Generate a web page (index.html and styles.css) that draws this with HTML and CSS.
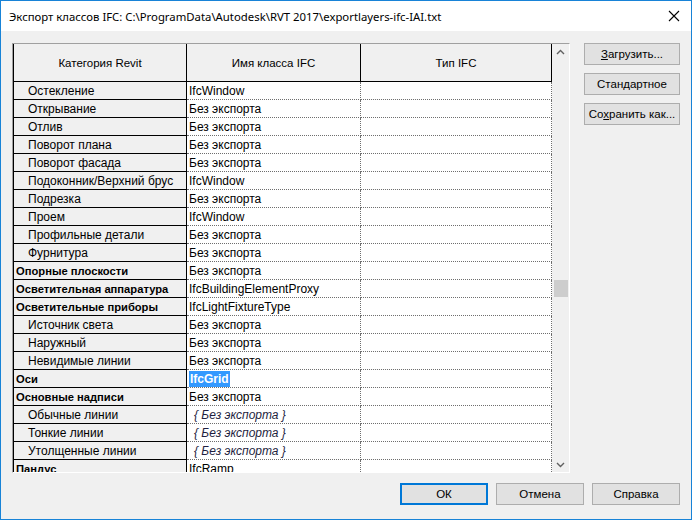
FILE: index.html
```html
<!DOCTYPE html>
<html lang="ru">
<head>
<meta charset="utf-8">
<title>Экспорт классов IFC</title>
<link rel="stylesheet" href="styles.css">
</head>
<body>
<div class="window">
  <div class="titlebar">
    <span class="title">Экспорт классов IFC: C:\ProgramData\Autodesk\RVT 2017\exportlayers-ifc-IAI.txt</span>
    <svg class="close" width="12" height="12" viewBox="0 0 12 12"><path d="M1 1 L11 11 M11 1 L1 11" stroke="#000" stroke-width="1.1" fill="none"/></svg>
  </div>
  <div class="content">
    <div class="top">
      <div class="panel">
        <div class="table">
          <div class="row head">
            <div class="hc">Категория Revit</div>
            <div class="hc">Имя класса IFC</div>
            <div class="hc">Тип IFC</div>
          </div>
          <div class="row"><div class="c1 sub">Остекление</div><div class="c2">IfcWindow</div><div class="c3"></div></div>
          <div class="row"><div class="c1 sub">Открывание</div><div class="c2">Без экспорта</div><div class="c3"></div></div>
          <div class="row"><div class="c1 sub">Отлив</div><div class="c2">Без экспорта</div><div class="c3"></div></div>
          <div class="row"><div class="c1 sub">Поворот плана</div><div class="c2">Без экспорта</div><div class="c3"></div></div>
          <div class="row"><div class="c1 sub">Поворот фасада</div><div class="c2">Без экспорта</div><div class="c3"></div></div>
          <div class="row"><div class="c1 sub">Подоконник/Верхний брус</div><div class="c2">IfcWindow</div><div class="c3"></div></div>
          <div class="row"><div class="c1 sub">Подрезка</div><div class="c2">Без экспорта</div><div class="c3"></div></div>
          <div class="row"><div class="c1 sub">Проем</div><div class="c2">IfcWindow</div><div class="c3"></div></div>
          <div class="row"><div class="c1 sub">Профильные детали</div><div class="c2">Без экспорта</div><div class="c3"></div></div>
          <div class="row"><div class="c1 sub">Фурнитура</div><div class="c2">Без экспорта</div><div class="c3"></div></div>
          <div class="row"><div class="c1 main">Опорные плоскости</div><div class="c2">Без экспорта</div><div class="c3"></div></div>
          <div class="row"><div class="c1 main">Осветительная аппаратура</div><div class="c2">IfcBuildingElementProxy</div><div class="c3"></div></div>
          <div class="row"><div class="c1 main">Осветительные приборы</div><div class="c2">IfcLightFixtureType</div><div class="c3"></div></div>
          <div class="row"><div class="c1 sub">Источник света</div><div class="c2">Без экспорта</div><div class="c3"></div></div>
          <div class="row"><div class="c1 sub">Наружный</div><div class="c2">Без экспорта</div><div class="c3"></div></div>
          <div class="row"><div class="c1 sub">Невидимые линии</div><div class="c2">Без экспорта</div><div class="c3"></div></div>
          <div class="row"><div class="c1 main">Оси</div><div class="c2"><span class="sel">IfcGrid</span></div><div class="c3"></div></div>
          <div class="row"><div class="c1 main">Основные надписи</div><div class="c2">Без экспорта</div><div class="c3"></div></div>
          <div class="row"><div class="c1 sub">Обычные линии</div><div class="c2 inh">{ Без экспорта }</div><div class="c3"></div></div>
          <div class="row"><div class="c1 sub">Тонкие линии</div><div class="c2 inh">{ Без экспорта }</div><div class="c3"></div></div>
          <div class="row"><div class="c1 sub">Утолщенные линии</div><div class="c2 inh">{ Без экспорта }</div><div class="c3"></div></div>
          <div class="row"><div class="c1 main">Пандус</div><div class="c2">IfcRamp</div><div class="c3"></div></div>
        </div>
        <div class="scrollbar">
          <svg class="arrow" width="9" height="6" viewBox="0 0 9 6"><path d="M1 5 L4.5 1.5 L8 5" stroke="#606060" stroke-width="1.4" fill="none"/></svg>
          <div class="track"><div class="thumb"></div></div>
          <svg class="arrow" width="9" height="6" viewBox="0 0 9 6"><path d="M1 1 L4.5 4.5 L8 1" stroke="#606060" stroke-width="1.4" fill="none"/></svg>
        </div>
      </div>
      <div class="side">
        <button class="btn side-btn"><u>З</u>агрузить...</button>
        <button class="btn side-btn">Стандартное</button>
        <button class="btn side-btn">Со<u>х</u>ранить как...</button>
      </div>
    </div>
    <div class="bottom">
      <button class="btn foot-btn default">ОК</button>
      <button class="btn foot-btn">Отмена</button>
      <button class="btn foot-btn">Справка</button>
    </div>
  </div>
</div>
</body>
</html>
```

FILE: styles.css
```css
* { box-sizing: border-box; }
html, body { margin: 0; padding: 0; }
body {
  width: 692px;
  height: 520px;
  background: #f0f0f0;
  font-family: "Liberation Sans", Arial, sans-serif;
  font-size: 12px;
  color: #000;
  overflow: hidden;
}
.window {
  width: 692px;
  height: 520px;
  border: 1px solid #1883d7;
  background: #f0f0f0;
  display: flex;
  flex-direction: column;
}
.titlebar {
  height: 30px;
  background: #fff;
  display: flex;
  align-items: center;
  justify-content: space-between;
  padding: 0 10px 0 8px;
  flex: none;
}
.title {
  font-family: "Noto Sans", "Open Sans", sans-serif;
  font-size: 11.35px;
  color: #000;
  padding-top: 1px;
}
.close { display: block; margin-right: 1px; }
.content {
  flex: 1;
  display: flex;
  flex-direction: column;
  padding: 12px 11px 0 11px;
}
.top {
  display: flex;
  align-items: flex-start;
  gap: 14px;
}
.panel {
  width: 559px;
  height: 430px;
  border: 1px solid #a0a0a0;
  border-right-color: #fff;
  border-bottom-color: #fff;
  display: flex;
  overflow: hidden;
  background: #fff;
}
.table {
  width: 539px;
  border-left: 1px solid #000;
  overflow: hidden;
  flex: none;
}
.row {
  display: grid;
  grid-template-columns: 173px 174px 191px;
  height: 18px;
}
.row.head { height: 38px; }
.hc {
  background: #f0f0f0;
  border-right: 1px solid #000;
  border-bottom: 1px solid #000;
  display: flex;
  align-items: center;
  justify-content: center;
  font-size: 11.5px;
  padding-top: 1px;
}
.c1 {
  background: #f0f0f0;
  border-right: 1px solid #000;
  border-bottom: 1px solid #000;
  display: flex;
  align-items: center;
  white-space: nowrap;
  overflow: hidden;
  padding-top: 1px;
}
.c1.main { font-weight: bold; font-size: 11.2px; padding-left: 2px; }
.c1.sub { padding-left: 14px; }
.c2, .c3 {
  background: #fff;
  border-right: 1px dotted #6e6e6e;
  border-bottom: 1px dotted #6e6e6e;
  display: flex;
  align-items: center;
  white-space: nowrap;
  overflow: hidden;
  padding-top: 1px;
}
.c2 { padding-left: 2px; }
.c2.inh {
  font-style: italic;
  color: #1e1e40;
  padding-left: 7px;
}
.sel {
  background: #3399ff;
  color: #fff;
  font-weight: bold;
  padding: 1px 1px 1px 1px;
  line-height: 14px;
}
.scrollbar {
  width: 18px;
  flex: none;
  background: #f0f0f0;
  display: flex;
  flex-direction: column;
  align-items: center;
  padding: 5px 1px 4px 0;
}
.arrow { display: block; flex: none; }
.track {
  flex: 1;
  width: 100%;
  position: relative;
}
.thumb {
  position: absolute;
  left: 2px;
  right: 1px;
  top: 225px;
  height: 17px;
  background: #cdcdcd;
}
.side {
  display: flex;
  flex-direction: column;
  gap: 8px;
}
.btn {
  font-family: "Liberation Sans", Arial, sans-serif;
  font-size: 11.5px;
  color: #000;
  background: #e1e1e1;
  border: 1px solid #adadad;
  padding: 0;
  margin: 0;
}
.side-btn {
  width: 96px;
  height: 22px;
}
.bottom {
  display: flex;
  justify-content: flex-end;
  gap: 8px;
  margin-top: 10px;
}
.foot-btn {
  width: 88px;
  height: 22px;
}
.foot-btn.default {
  border: 2px solid #0078d7;
}
```
